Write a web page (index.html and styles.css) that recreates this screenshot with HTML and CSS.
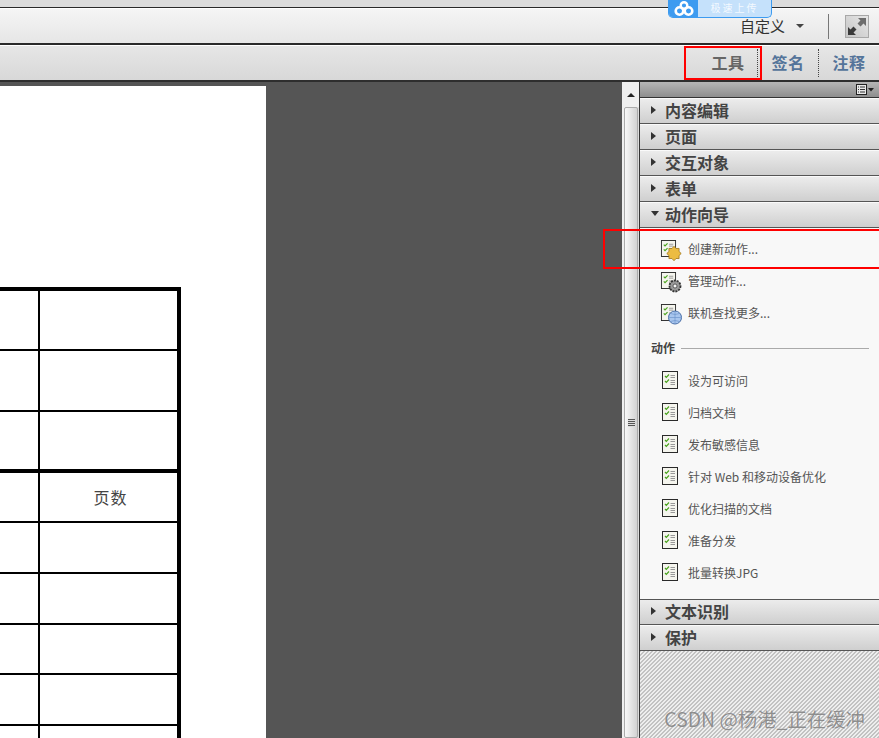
FILE: index.html
```html
<!DOCTYPE html>
<html lang="zh">
<head>
<meta charset="utf-8">
<title>动作向导</title>
<link rel="stylesheet" href="styles.css">
</head>
<body>
<div class="app">
  <div class="titlebar"></div>
  <div class="toolbar">
    <span class="custom">自定义</span>
    <span class="caret"></span>
    <span class="tb-sep"></span>
    <span class="expand">
      <svg width="24" height="23" viewBox="0 0 24 23"><defs><linearGradient id="tile" x1="1" y1="0" x2="0" y2="1"><stop offset="0" stop-color="#e8e8e8"/><stop offset="1" stop-color="#c4c4c4"/></linearGradient></defs><rect x=".5" y=".5" width="23" height="22" fill="url(#tile)" stroke="#a8a8a8"/><path d="M13 3h8v8l-2.500-2.500-3 3-3-3 3-3z" fill="#6d6d6d"/><path d="M11 20H3v-8l2.500 2.500 3-3 3 3-3 3z" fill="#3a3a3a"/></svg>
    </span>
  </div>
  <div class="tabsbar">
    <span class="tab tab-active">工具</span>
    <span class="tab-sep"></span>
    <span class="tab">签名</span>
    <span class="tab-sep"></span>
    <span class="tab">注释</span>
  </div>
  <div class="workspace">
    <div class="docarea">
      <div class="page">
        <div class="table">
          <div class="row r1 top-thick"><div class="c1"></div><div class="c2"></div></div>
          <div class="row r2"><div class="c1"></div><div class="c2"></div></div>
          <div class="row r3 bottom-thick"><div class="c1"></div><div class="c2"></div></div>
          <div class="row r4"><div class="c1"></div><div class="c2 pages">页数</div></div>
          <div class="row r5"><div class="c1"></div><div class="c2"></div></div>
          <div class="row r5"><div class="c1"></div><div class="c2"></div></div>
          <div class="row r6"><div class="c1"></div><div class="c2"></div></div>
          <div class="row r5"><div class="c1"></div><div class="c2"></div></div>
          <div class="row r5"><div class="c1"></div><div class="c2"></div></div>
        </div>
      </div>
    </div>
    <div class="scrollbar">
      <div class="sb-up"><span class="sb-arrow"></span></div>
      <div class="sb-thumb"><span class="grip"></span></div>
    </div>
    <div class="panel">
      <div class="panel-top">
        <svg width="18" height="11" viewBox="0 0 18 11"><rect x=".5" y=".5" width="10" height="10" fill="#e8e8e8" stroke="#222"/><path d="M2 3h1M4 3h5M2 5.500h1M4 5.500h5M2 8h1M4 8h5" stroke="#333"/><path d="M12 4h6l-3 3.500z" fill="#222"/></svg>
      </div>
      <div class="sec"><span class="tri"></span>内容编辑</div>
      <div class="sec"><span class="tri"></span>页面</div>
      <div class="sec"><span class="tri"></span>交互对象</div>
      <div class="sec"><span class="tri"></span>表单</div>
      <div class="sec"><span class="tri-down"></span>动作向导</div>
      <div class="content">
        <div class="item"><svg class="ic" width="24" height="22" viewBox="0 0 24 22"><use href="#doc" x=".5" y="1" width="16" height="17"/><path d="M21.200 14.500L19 16.570 19.090 19.590 16.070 19.490 14 21.700 11.930 19.490 8.910 19.590 9 16.570 6.800 14.500 9 12.430 8.910 9.410 11.930 9.510 14 7.300 16.070 9.510 19.090 9.410 19 12.430z" fill="#ecbc42" stroke="#9c7418" stroke-width=".8"/></svg><span>创建新动作...</span></div>
        <div class="item"><svg class="ic" width="24" height="22" viewBox="0 0 24 22"><use href="#doc" x=".5" y="1" width="16" height="17"/><circle cx="15" cy="15" r="5.500" fill="#999" stroke="#333" stroke-width="1.800" stroke-dasharray="2 1"/><circle cx="15" cy="15" r="2" fill="#f4f4f4" stroke="#333" stroke-width=".7"/></svg><span>管理动作...</span></div>
        <div class="item"><svg class="ic" width="24" height="22" viewBox="0 0 24 22"><use href="#doc" x=".5" y="1" width="16" height="17"/><circle cx="15" cy="14.500" r="6.500" fill="#a9c6ee" stroke="#4a6fa8"/><path d="M8.500 14.500h13M15 8v13M10.500 10.500q4.500 2 9 0M10.500 18.500q4.500-2 9 0" stroke="#6f95cb" stroke-width=".7" fill="none"/></svg><span>联机查找更多...</span></div>
        <div class="group"><span>动作</span><i></i></div>
        <div class="item item-sm"><svg class="ic" width="22" height="22" viewBox="0 0 22 22"><use href="#doc" x="0" y="0" width="16" height="18"/></svg><span>设为可访问</span></div>
        <div class="item item-sm"><svg class="ic" width="22" height="22" viewBox="0 0 22 22"><use href="#doc" x="0" y="0" width="16" height="18"/></svg><span>归档文档</span></div>
        <div class="item item-sm"><svg class="ic" width="22" height="22" viewBox="0 0 22 22"><use href="#doc" x="0" y="0" width="16" height="18"/></svg><span>发布敏感信息</span></div>
        <div class="item item-sm"><svg class="ic" width="22" height="22" viewBox="0 0 22 22"><use href="#doc" x="0" y="0" width="16" height="18"/></svg><span>针对 Web 和移动设备优化</span></div>
        <div class="item item-sm"><svg class="ic" width="22" height="22" viewBox="0 0 22 22"><use href="#doc" x="0" y="0" width="16" height="18"/></svg><span>优化扫描的文档</span></div>
        <div class="item item-sm"><svg class="ic" width="22" height="22" viewBox="0 0 22 22"><use href="#doc" x="0" y="0" width="16" height="18"/></svg><span>准备分发</span></div>
        <div class="item item-sm"><svg class="ic" width="22" height="22" viewBox="0 0 22 22"><use href="#doc" x="0" y="0" width="16" height="18"/></svg><span>批量转换JPG</span></div>
      </div>
      <div class="sec sec-first"><span class="tri"></span>文本识别</div>
      <div class="sec"><span class="tri"></span>保护</div>
      <div class="hatch"></div>
    </div>
  </div>
  <div class="badge">
    <span class="badge-logo"><svg width="20" height="16" viewBox="0 0 20 16"><circle cx="5.500" cy="10" r="3.800" fill="none" stroke="#fff" stroke-width="2.600"/><circle cx="14.500" cy="10" r="3.800" fill="none" stroke="#fff" stroke-width="2.600"/><circle cx="10" cy="4.500" r="3.300" fill="none" stroke="#fff" stroke-width="2.400"/></svg></span>
    <span class="badge-text">极速上传</span>
  </div>
  <div class="mark mark-tab"></div>
  <div class="mark mark-item"></div>
  <div class="watermark">CSDN @杨港_正在缓冲</div>
</div>
<svg class="defs" width="0" height="0">
  <symbol id="doc" viewBox="0 0 16 18">
    <rect x=".5" y=".5" width="15" height="17" fill="#f5f5ee" stroke="#2a2a2a"/>
    <path d="M3 5l1.300 1.300L7 3.500M3 10l1.300 1.300L7 8.500" stroke="#4aa31e" stroke-width="1.200" fill="none"/>
    <path d="M8.500 4.500H13M8.500 6.500H13M8.500 9.500H13M8.500 11.500H13M8.500 13.500H13" stroke="#999"/>
  </symbol>
</svg>
</body>
</html>
```
FILE: styles.css
```css
* { box-sizing: border-box; }
html, body { margin: 0; padding: 0; height: 100%; overflow: hidden; }
body { font-family: "Noto Sans CJK SC", "Liberation Sans", sans-serif; }
.defs { position: absolute; }
.app { position: relative; width: 879px; height: 738px; overflow: hidden; background: #555; display: flex; flex-direction: column; }
.titlebar { height: 8px; flex: none; background: #dcdcdc; border-bottom: 1px solid #2a2a2a; }
.toolbar { height: 37px; flex: none; display: flex; align-items: center; justify-content: flex-end; background: linear-gradient(#f5f5f5, #e6e6e6); border-top: 1px solid #fff; border-bottom: 2px solid #2a2a2a; padding-right: 10px; }
.custom { font-size: 15px; color: #333; margin-right: 11px; padding-bottom: 2px; }
.caret { width: 0; height: 0; border-left: 4px solid transparent; border-right: 4px solid transparent; border-top: 4px solid #444; margin-right: 24px; }
.tb-sep { width: 1px; height: 25px; background: #777; margin-right: 16px; }
.expand { display: flex; }
.tabsbar { height: 37px; flex: none; display: flex; align-items: center; justify-content: flex-end; background: linear-gradient(#e6e6e6, #d8d8d8); border-top: 1px solid #fff; border-bottom: 2px solid #2e2e2e; }
.tab { font-size: 16px; font-weight: 700; color: #54749a; flex: 0 0 60px; text-align: center; padding-bottom: 2px; letter-spacing: 0.5px; }
.tab-active { color: #666; flex: 0 0 58px; }
.tab-sep { flex: 0 0 1px; height: 28px; border-left: 1px dotted #444; }
.workspace { flex: 1; display: flex; min-height: 0; }
.docarea { width: 622px; flex: none; padding-top: 4px; background: #555; overflow: hidden; }
.page { width: 266px; height: 100%; background: #fff; padding-top: 201px; }
.table { width: 181px; border-right: 4px solid #000; }
.row { display: flex; border-bottom: 2px solid #000; }
.c1 { width: 38px; flex: none; }
.c2 { flex: 1; border-left: 2px solid #000; }
.top-thick { border-top: 4px solid #000; }
.bottom-thick { border-bottom-width: 4px; }
.r1 { height: 64px; }
.r2 { height: 61px; }
.r3 { height: 61px; }
.r4 { height: 50px; }
.r5 { height: 51px; }
.r6 { height: 50px; }
.pages { font-size: 16px; color: #444; display: flex; align-items: center; justify-content: center; letter-spacing: 1px; padding-left: 4px; }
.scrollbar { width: 18px; flex: none; background: linear-gradient(90deg, #f0f0f0, #dcdcdc); display: flex; flex-direction: column; border-right: 1px solid #333; padding-left: 1px; }
.sb-up { height: 25px; flex: none; background: #efefef; display: flex; justify-content: center; align-items: center; }
.sb-arrow { width: 0; height: 0; border-left: 4px solid transparent; border-right: 4px solid transparent; border-bottom: 4px solid #222; }
.sb-thumb { flex: 1; margin: 0 1px; border: 1px solid #aaa; border-radius: 2px; background: linear-gradient(90deg, #f8f8f8, #d2d2d2); display: flex; align-items: center; justify-content: center; }
.grip { width: 7px; height: 8px; background: repeating-linear-gradient(#555 0 1px, #ddd 1px 2px); }
.panel { width: 239px; flex: none; display: flex; flex-direction: column; background: #f8f8f8; }
.panel-top { height: 16px; flex: none; background: linear-gradient(#b6b6b6, #8e8e8e); border-bottom: 1px solid #333; display: flex; justify-content: flex-end; align-items: center; padding-right: 5px; }
.sec { height: 26px; flex: none; display: flex; align-items: center; font-size: 16px; font-weight: 700; color: #444; background: linear-gradient(#ececec, #cfcfcf); border-bottom: 1px solid #555; border-top: 1px solid #fafafa; padding: 0 0 3px 11px; }
.tri { width: 0; height: 0; border-top: 4px solid transparent; border-bottom: 4px solid transparent; border-left: 5px solid #333; margin-right: 9px; }
.tri-down { width: 0; height: 0; border-left: 4px solid transparent; border-right: 4px solid transparent; border-top: 5px solid #333; margin-right: 6px; }
.content { height: 371px; flex: none; padding-top: 6px; background: #f8f8f8; }
.sec-first { border-top: 1px solid #555; }
.item { height: 32px; display: flex; align-items: center; font-size: 12px; color: #555; padding-left: 20px; }
.item span { margin-bottom: 3px; }
.item-sm { padding-left: 22px; }
.ic { margin-right: 4px; flex: none; }
.group { height: 36px; display: flex; align-items: center; gap: 6px; font-size: 12px; font-weight: 700; color: #444; padding: 0 10px 0 11px; }
.group span { margin-bottom: 2px; }
.group i { flex: 1; height: 1px; background: #aaa; }
.hatch { flex: 1; background: repeating-linear-gradient(135deg, #c2c2c2 0 1.414px, #eeeeee 1.414px 2.828px); }
.badge { position: absolute; left: 668px; top: 0; width: 104px; height: 18px; display: flex; border-radius: 0 0 5px 5px; overflow: hidden; border: 1px solid #3d9bf0; border-top: 0; background: #c5e1fb; }
.badge-logo { width: 29px; flex: none; background: #3d9bf0; display: flex; align-items: center; justify-content: center; }
.badge-text { flex: 1; font-size: 10px; letter-spacing: 2px; color: #f4f9ff; text-align: center; line-height: 14px; padding-top: 1px; }
.mark { position: absolute; border: 2px solid #f00; }
.mark-tab { left: 684px; top: 46px; width: 78px; height: 34px; }
.mark-item { left: 603px; top: 229px; width: 290px; height: 40px; }
.watermark { position: absolute; right: 14px; top: 706px; font-size: 19.400px; line-height: 26px; color: rgba(110,110,110,.75); text-shadow: 0 0 1px rgba(255,255,255,.6); }
```
